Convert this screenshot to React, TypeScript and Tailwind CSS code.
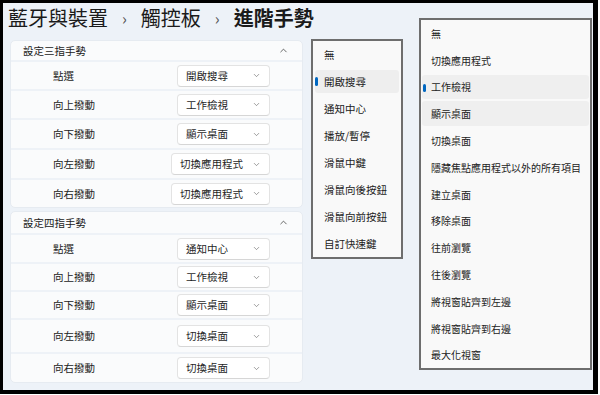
import { ChevronDown, ChevronUp } from "lucide-react";

const font = { fontFamily: '"Noto Sans CJK TC", "Noto Sans", sans-serif' };

type Row = { label: string; value: string; h: string };

const threeFinger: Row[] = [
  { label: "點選", value: "開啟搜尋", h: "h-[29px]" },
  { label: "向上撥動", value: "工作檢視", h: "h-[29px]" },
  { label: "向下撥動", value: "顯示桌面", h: "h-[30px]" },
  { label: "向左撥動", value: "切換應用程式", h: "h-[30px]" },
  { label: "向右撥動", value: "切換應用程式", h: "h-[29px]" },
];

const fourFinger: Row[] = [
  { label: "點選", value: "通知中心", h: "h-[29px]" },
  { label: "向上撥動", value: "工作檢視", h: "h-[28px]" },
  { label: "向下撥動", value: "顯示桌面", h: "h-[28px]" },
  { label: "向左撥動", value: "切換桌面", h: "h-[34px]" },
  { label: "向右撥動", value: "切換桌面", h: "h-[30px]" },
];

const tapMenu = ["無", "開啟搜尋", "通知中心", "播放/暫停", "滑鼠中鍵", "滑鼠向後按鈕", "滑鼠向前按鈕", "自訂快速鍵"];

const swipeMenu = [
  "無",
  "切換應用程式",
  "工作檢視",
  "顯示桌面",
  "切換桌面",
  "隱藏焦點應用程式以外的所有項目",
  "建立桌面",
  "移除桌面",
  "往前瀏覽",
  "往後瀏覽",
  "將視窗貼齊到左邊",
  "將視窗貼齊到右邊",
  "最大化視窗",
];

function GestureCard({ title, rows, headH }: { title: string; rows: Row[]; headH: string }) {
  return (
    <div className="w-[293px] ml-[7px] rounded-[5px] bg-[#fafbfc] border border-[#e6ebf1] overflow-hidden">
      <div className={`${headH} flex items-center justify-between pl-[12px] pr-[13px]`}>
        <span className="text-[10.5px] text-[#222]">{title}</span>
        <ChevronUp size={11} strokeWidth={1.6} className="text-[#333]" />
      </div>
      {rows.map((r, i) => (
        <div
          key={i}
          className={`${r.h} flex items-center justify-between border-t-2 border-[#eef2f7] pl-[42px] pr-[32px]`}
        >
          <span className="text-[10.5px] text-[#222]">{r.label}</span>
          <div className="h-[22px] min-w-[93px] flex items-center justify-between gap-[9px] pl-[8px] pr-[8px] bg-white border border-[#e3e3e3] border-b-[#d6d6d6] rounded-[4px]">
            <span className="text-[10.5px] text-[#1f1f1f] whitespace-nowrap">{r.value}</span>
            <ChevronDown size={9} strokeWidth={1.5} className="text-[#555]" />
          </div>
        </div>
      ))}
    </div>
  );
}

export default function App() {
  return (
    <div className="w-[600px] h-[395px] bg-white">
      <div
        style={font}
        className="w-[598px] h-[394px] border-[3px] border-r-[5px] border-b-[4px] border-black bg-[#edf2f8] relative overflow-hidden"
      >
        <div className="h-[37px] pl-[5px] pt-[3px] flex items-start text-[20px] leading-[24px] text-[#1b1b1b] whitespace-nowrap">
          <span>藍牙與裝置</span>
          <span className="mx-[14px] text-[16px] text-[#555]">›</span>
          <span>觸控板</span>
          <span className="mx-[14px] text-[16px] text-[#555]">›</span>
          <span className="font-semibold">進階手勢</span>
        </div>
        <GestureCard title="設定三指手勢" rows={threeFinger} headH="h-[19px]" />
        <div className="h-[3px]" />
        <GestureCard title="設定四指手勢" rows={fourFinger} headH="h-[21px]" />

        {/* tap dropdown */}
        <div className="absolute left-[308px] top-[36px] w-[92px] border-2 border-[#6e6e6e] bg-[#f9f9f9]">
          {tapMenu.map((t, i) => (
            <div key={i} className="h-[27px] px-[2px] py-[2px]">
              <div
                className={`h-full relative flex items-center pl-[9px] rounded-[3px] ${i === 1 ? "bg-[#eeeeee]" : ""}`}
              >
                {i === 1 && <div className="absolute left-0 top-[7px] w-[2.5px] h-[9px] rounded-full bg-[#0067c0]" />}
                <span className="text-[10.5px] text-[#222] whitespace-nowrap">{t}</span>
              </div>
            </div>
          ))}
        </div>

        {/* swipe dropdown */}
        <div className="absolute left-[416px] top-[15px] w-[173px] border-2 border-[#6e6e6e] bg-[#f9f9f9]">
          {swipeMenu.map((t, i) => (
            <div key={i} className="h-[26.8px] px-[1px] py-[1px]">
              <div
                className={`h-full relative flex items-center pl-[9px] rounded-[3px] ${
                  i === 2 || i === 3 ? "bg-[#efefef]" : ""
                }`}
              >
                {i === 2 && <div className="absolute left-[1px] top-[9px] w-[2.5px] h-[8px] rounded-full bg-[#0067c0]" />}
                <span className="text-[10px] text-[#222] whitespace-nowrap">{t}</span>
              </div>
            </div>
          ))}
        </div>
      </div>
    </div>
  );
}
